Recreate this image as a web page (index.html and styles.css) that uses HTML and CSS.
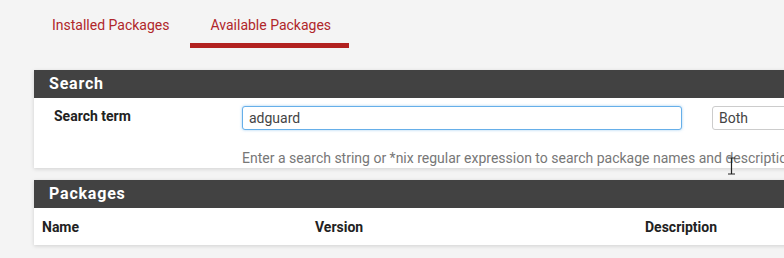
FILE: index.html
```html
<!DOCTYPE html>
<html lang="en">
<head>
    <meta charset="UTF-8">
    <title>System / Package Manager / Available Packages</title>
    <link rel="stylesheet" href="styles.css">
</head>
<body>
    <div class="page">
        <!-- tabs -->
        <ul class="nav-tabs">
            <li><a href="#">Installed Packages</a></li>
            <li class="active"><a href="#">Available Packages</a></li>
        </ul>

        <!-- search panel -->
        <div class="panel">
            <div class="panel-heading">Search</div>
            <div class="panel-body form-row">
                <label class="form-label" for="searchstr">Search term</label>
                <div class="form-field">
                    <div class="field-line">
                        <input type="text" id="searchstr" class="form-control focused" value="adguard">
                        <select class="form-control select">
                            <option>Both</option>
                            <option>Name</option>
                            <option>Description</option>
                        </select>
                    </div>
                    <span class="help-block">Enter a search string or *nix regular expression to search package names and descriptions.</span>
                </div>
            </div>
        </div>

        <!-- package list -->
        <div class="panel">
            <div class="panel-heading">Packages</div>
            <div class="table-head">
                <div>Name</div>
                <div>Version</div>
                <div>Description</div>
            </div>
        </div>

        <svg class="ibeam" width="9" height="18" viewBox="0 0 9 18">
            <path d="M1 1h7M1 17h7M4.5 1v16" stroke="#222" stroke-width="1.2" fill="none"/>
        </svg>
    </div>
</body>
</html>
```

FILE: styles.css
```css
html, body {
    margin: 0;
    padding: 0;
    overflow: hidden;
}
body {
    font-family: Roboto, "Liberation Sans", Arial, sans-serif;
    background-color: #f4f4f4;
    color: #333;
    font-size: 14px;
}
.page {
    position: relative;
    width: 1100px;
    padding: 0 0 0 34px;
}
.nav-tabs {
    list-style: none;
    margin: 0 0 22px 0;
    padding: 0;
    display: flex;
    height: 48px;
}
.nav-tabs li {
    margin-right: 3px;
}
.nav-tabs a {
    display: block;
    padding: 17px 18px 0 18px;
    height: 26px;
    color: #b0262a;
    text-decoration: none;
    font-size: 14px;
    border-bottom: 5px solid transparent;
}
.nav-tabs li.active a {
    border-bottom-color: #b2211f;
    padding: 17px 18px 0 20px;
}
.panel {
    background-color: #fff;
    box-shadow: 0 1px 4px rgba(0, 0, 0, 0.15);
    margin-bottom: 12px;
}
.panel-heading {
    background-color: #424242;
    color: #fff;
    font-weight: bold;
    font-size: 16px;
    letter-spacing: 0.8px;
    height: 28px;
    line-height: 28px;
    padding-left: 15px;
}
.form-row {
    display: flex;
    height: 70px;
}
.form-label {
    width: 188px;
    padding: 10px 0 0 20px;
    font-weight: bold;
    font-size: 14px;
    color: #222;
}
.form-field {
    padding-top: 8px;
}
.field-line {
    display: flex;
    gap: 30px;
}
.form-control {
    box-sizing: border-box;
    height: 24px;
    border: 1px solid #ccc;
    border-radius: 3px;
    font-family: inherit;
    font-size: 14px;
    color: #444;
    padding: 0 6px;
    background: #fff;
}
.focused {
    width: 440px;
    border-color: #66afe9;
    box-shadow: 0 0 3px rgba(102, 175, 233, 0.6);
    outline: none;
}
.select {
    width: 160px;
    appearance: none;
}
.help-block {
    display: block;
    margin-top: 20px;
    color: #777;
    font-size: 14px;
    white-space: nowrap;
}
.table-head {
    display: grid;
    grid-template-columns: 273px 330px 1fr;
    height: 37px;
    align-items: center;
    padding-left: 8px;
    font-weight: bold;
    font-size: 14px;
    color: #222;
}
.ibeam {
    position: absolute;
    left: 727px;
    top: 157px;
}
```
